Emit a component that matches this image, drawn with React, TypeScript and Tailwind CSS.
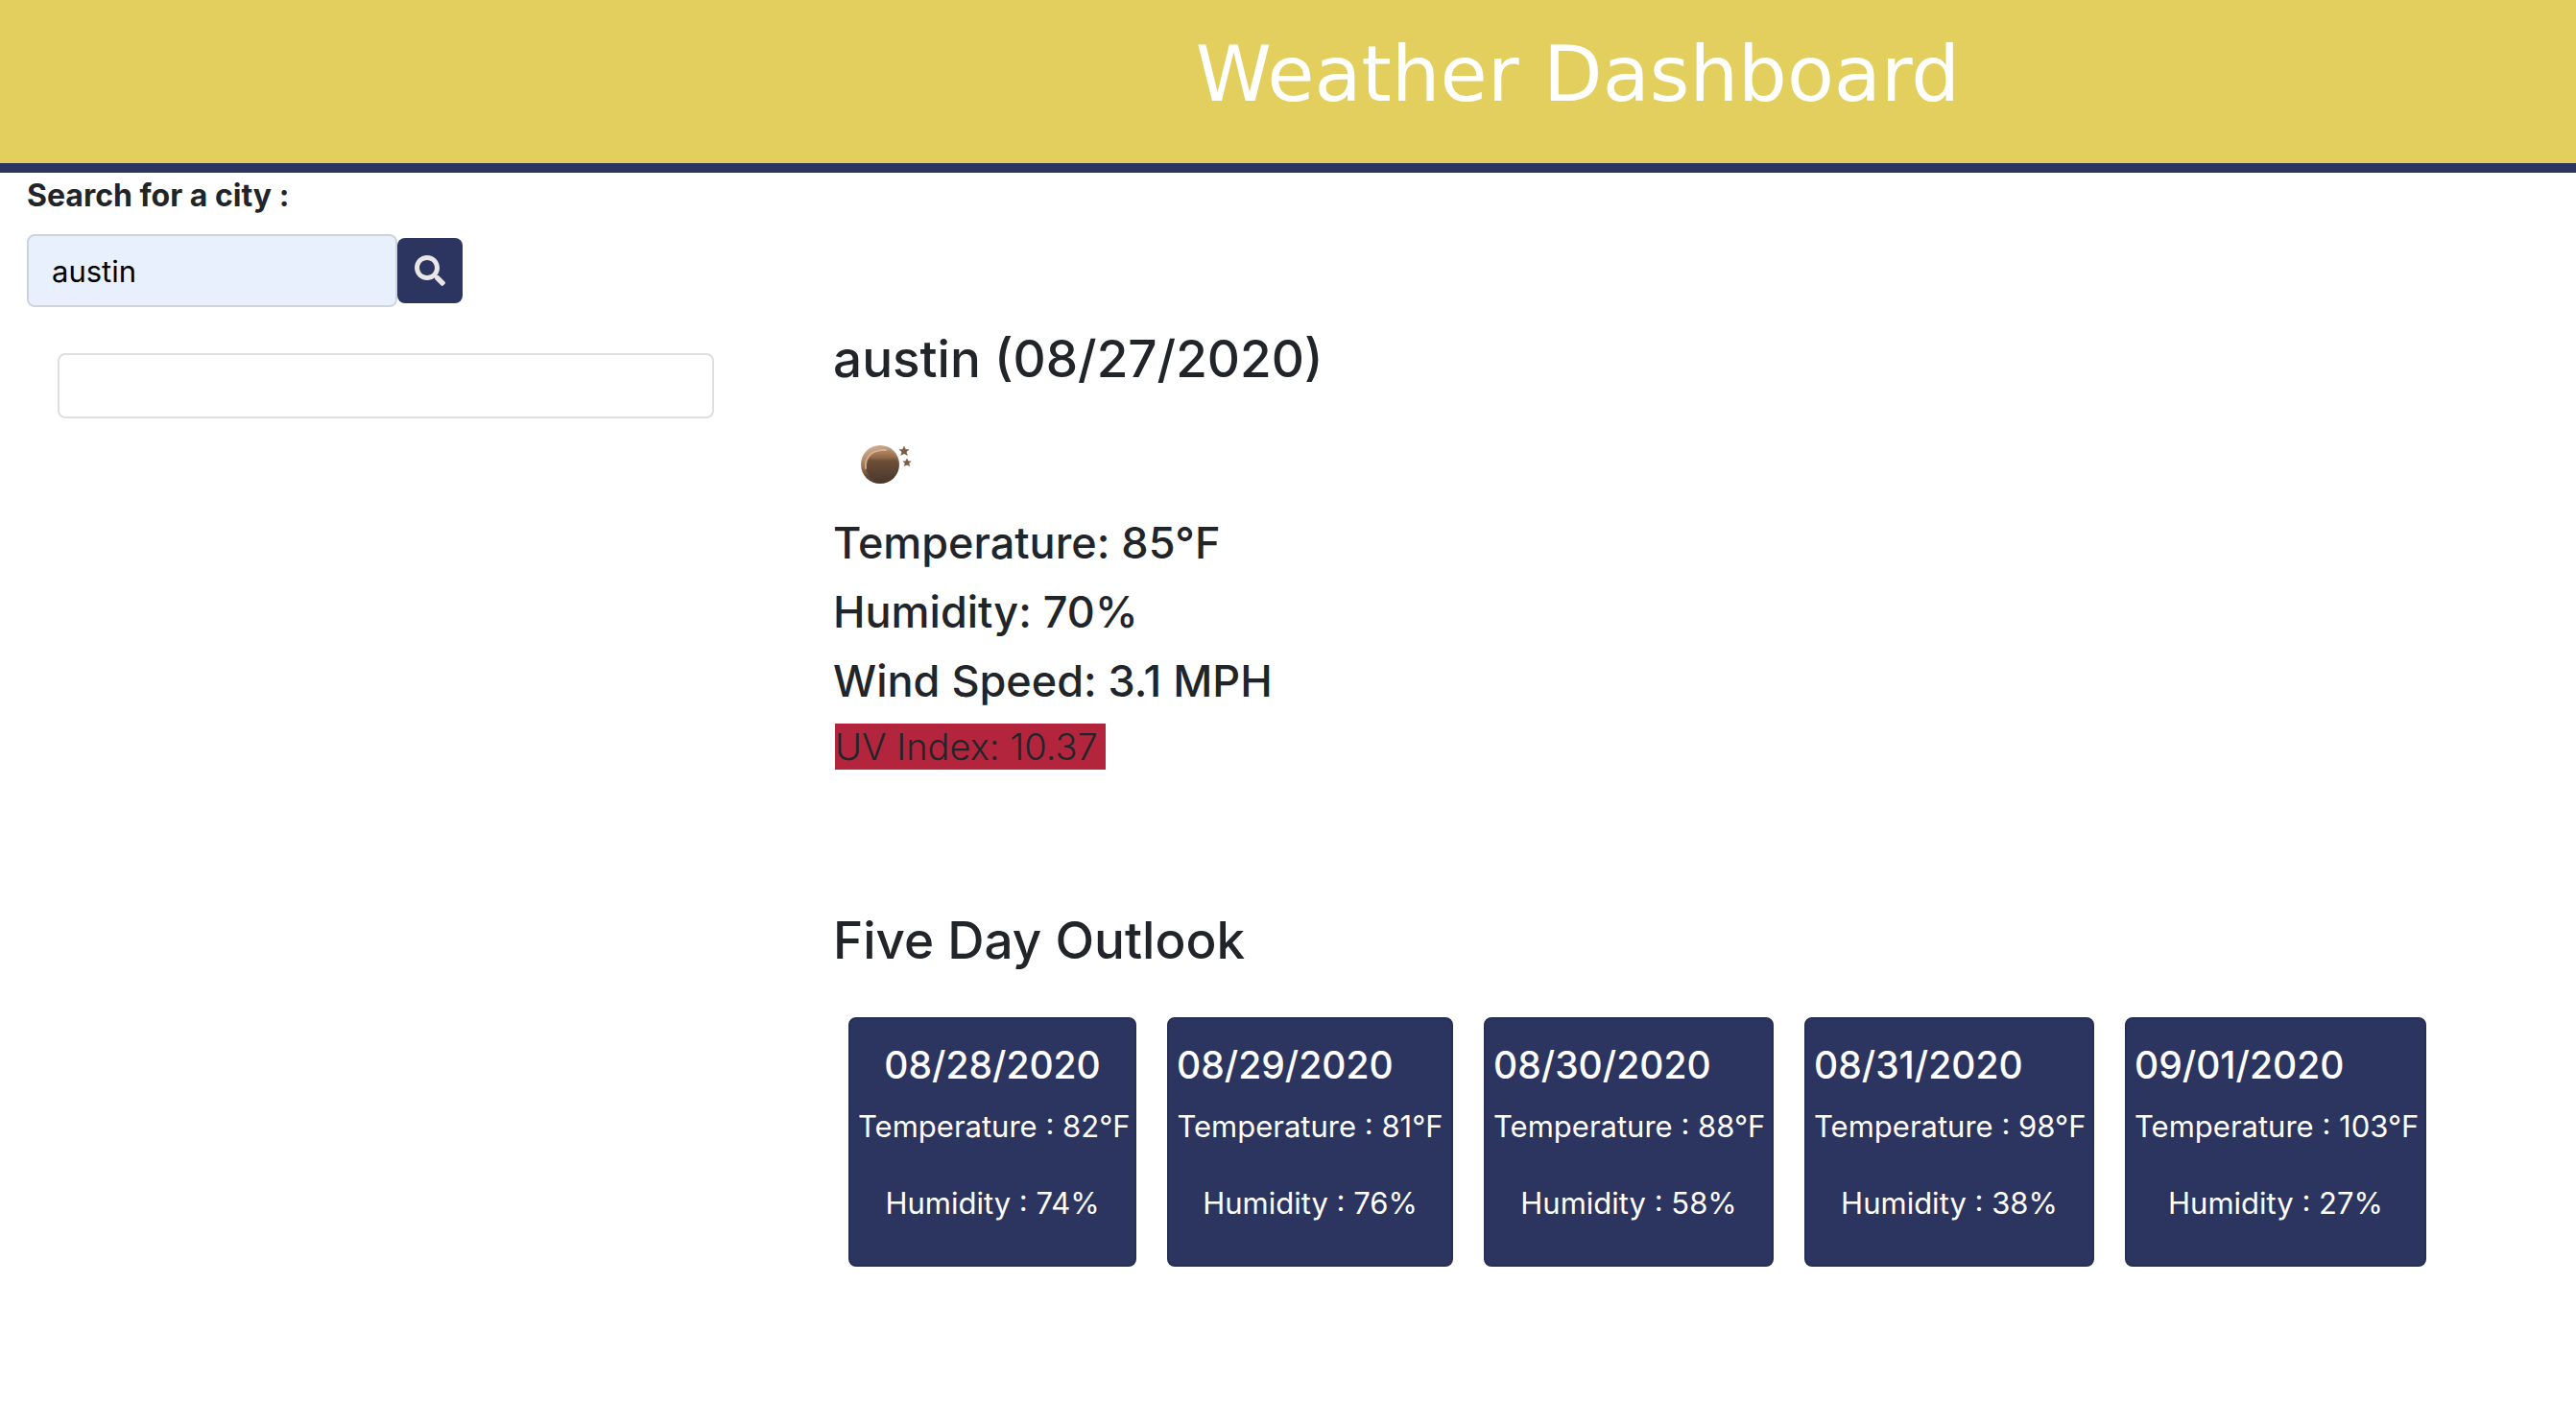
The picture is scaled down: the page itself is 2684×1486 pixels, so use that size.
import { useState } from "react";
import { FaSearch } from "react-icons/fa";
import clsx from "clsx";

const outlook = [
  { date: "08/28/2020", temperature: "82°F", humidity: "74%" },
  { date: "08/29/2020", temperature: "81°F", humidity: "76%" },
  { date: "08/30/2020", temperature: "88°F", humidity: "58%" },
  { date: "08/31/2020", temperature: "98°F", humidity: "38%" },
  { date: "09/01/2020", temperature: "103°F", humidity: "27%" },
];

const STAR = "M0 -5 L1.5 -1.7 L5 -1.5 L2.4 0.9 L3.4 4.4 L0 2.8 L-3.4 4.4 L-2.4 0.9 L-5 -1.5 L-1.5 -1.7 Z";

function ClearNightIcon() {
  return (
    <svg viewBox="0 0 100 96" className="h-24 w-[100px]" role="img" aria-label="Clear night">
      <defs>
        <linearGradient id="rim" x1="0.2" y1="0" x2="0.5" y2="1">
          <stop offset="0" stopColor="#d9b596" />
          <stop offset="0.4" stopColor="#a87f5d" />
          <stop offset="0.75" stopColor="#5e4633" />
          <stop offset="1" stopColor="#49372a" />
        </linearGradient>
        <linearGradient id="shade" x1="0" y1="0" x2="0" y2="1">
          <stop offset="0" stopColor="#b78c68" />
          <stop offset="0.25" stopColor="#94694a" />
          <stop offset="0.36" stopColor="#6d4f38" />
          <stop offset="1" stopColor="#4b392c" />
        </linearGradient>
      </defs>
      <circle cx="49" cy="50" r="20" fill="url(#rim)" />
      <circle cx="51" cy="51" r="17" fill="url(#shade)" />
      <path d="M34 54 C33 42 41 34 55 35" fill="none" stroke="#dcc0a6" strokeWidth="2" strokeLinecap="round" opacity="0.75" />
      <path d={STAR} fill="#7b5c47" stroke="#7b5c47" strokeOpacity="0.4" transform="translate(74 36)" />
      <path d={STAR} fill="#7b5c47" stroke="#7b5c47" strokeOpacity="0.4" transform="translate(77 48) scale(0.85)" />
    </svg>
  );
}

function SearchForm() {
  const [city, setCity] = useState("austin");
  return (
    <form className="pl-7" onSubmit={(e) => e.preventDefault()}>
      <label htmlFor="city" className="mb-4 block text-[32px] leading-[48px] font-bold">
        Search for a city :
      </label>
      <div className="flex items-center">
        <input
          id="city"
          type="text"
          value={city}
          onChange={(e) => setCity(e.target.value)}
          className="h-[76px] w-[386px] rounded-lg border-2 border-[#ced4da] bg-[#e8f0fe] px-6 text-[31px] leading-[48px] text-black"
        />
        <button
          type="submit"
          aria-label="Search"
          className="flex size-[68px] items-center justify-center rounded-lg bg-[#2c355f] text-[32px] text-[#e8e6e8]"
        >
          <FaSearch />
        </button>
      </div>
    </form>
  );
}

export default function App() {
  return (
    <div className="min-h-screen bg-white font-['Inter',sans-serif] text-[#212529]">
      <header className="border-b-10 border-[#2c355f] bg-[#e2cf5d] pt-[30px] pb-11 pl-[604px]">
        <h1 className="text-center font-['DejaVu_Sans',sans-serif] text-[80px] leading-[96px] text-white">
          Weather Dashboard
        </h1>
      </header>

      <div className="grid grid-cols-[31%_1fr]">
        <aside>
          <SearchForm />
          <ul className="mt-12 mr-[88px] ml-[60px] rounded-lg border-2 border-[#dfdfdf]">
            <li className="h-16" />
          </ul>
        </aside>

        <main className="pt-[160px] pl-9">
          <section>
            <h2 className="text-[53px] leading-[68px] font-medium">austin (08/27/2020)</h2>
            <div className="mt-[26px]">
              <ClearNightIcon />
            </div>
            <h3 className="text-[45px] leading-[72px] font-medium">Temperature: 85°F</h3>
            <h3 className="text-[45px] leading-[72px] font-medium">Humidity: 70%</h3>
            <h3 className="text-[45px] leading-[72px] font-medium">Wind Speed: 3.1 MPH</h3>
            <p className="mt-2 ml-0.5 w-fit bg-[#b2253d] pr-2 text-[38px] leading-[48px] font-light">
              UV Index: 10.37
            </p>
          </section>

          <section className="mt-[144px]">
            <h2 className="text-[53px] leading-[68px] font-medium">Five Day Outlook</h2>
            <ul className="mt-[46px] ml-4 grid grid-cols-[300px_298px_302px_302px_314px] gap-8">
              {outlook.map((day, i) => (
                <li
                  key={day.date}
                  className="h-[260px] rounded-lg border-2 border-[#272f55] bg-[#2c355f] px-2 pt-6 whitespace-nowrap text-white"
                >
                  <h4 className={clsx("text-[39px] leading-[48px] font-medium", i === 0 && "text-center")}>
                    {day.date}
                  </h4>
                  <p className="mt-4 text-center text-[31px] leading-[48px]">Temperature : {day.temperature}</p>
                  <p className="mt-8 text-center text-[31px] leading-[48px]">Humidity : {day.humidity}</p>
                </li>
              ))}
            </ul>
          </section>
        </main>
      </div>
    </div>
  );
}
